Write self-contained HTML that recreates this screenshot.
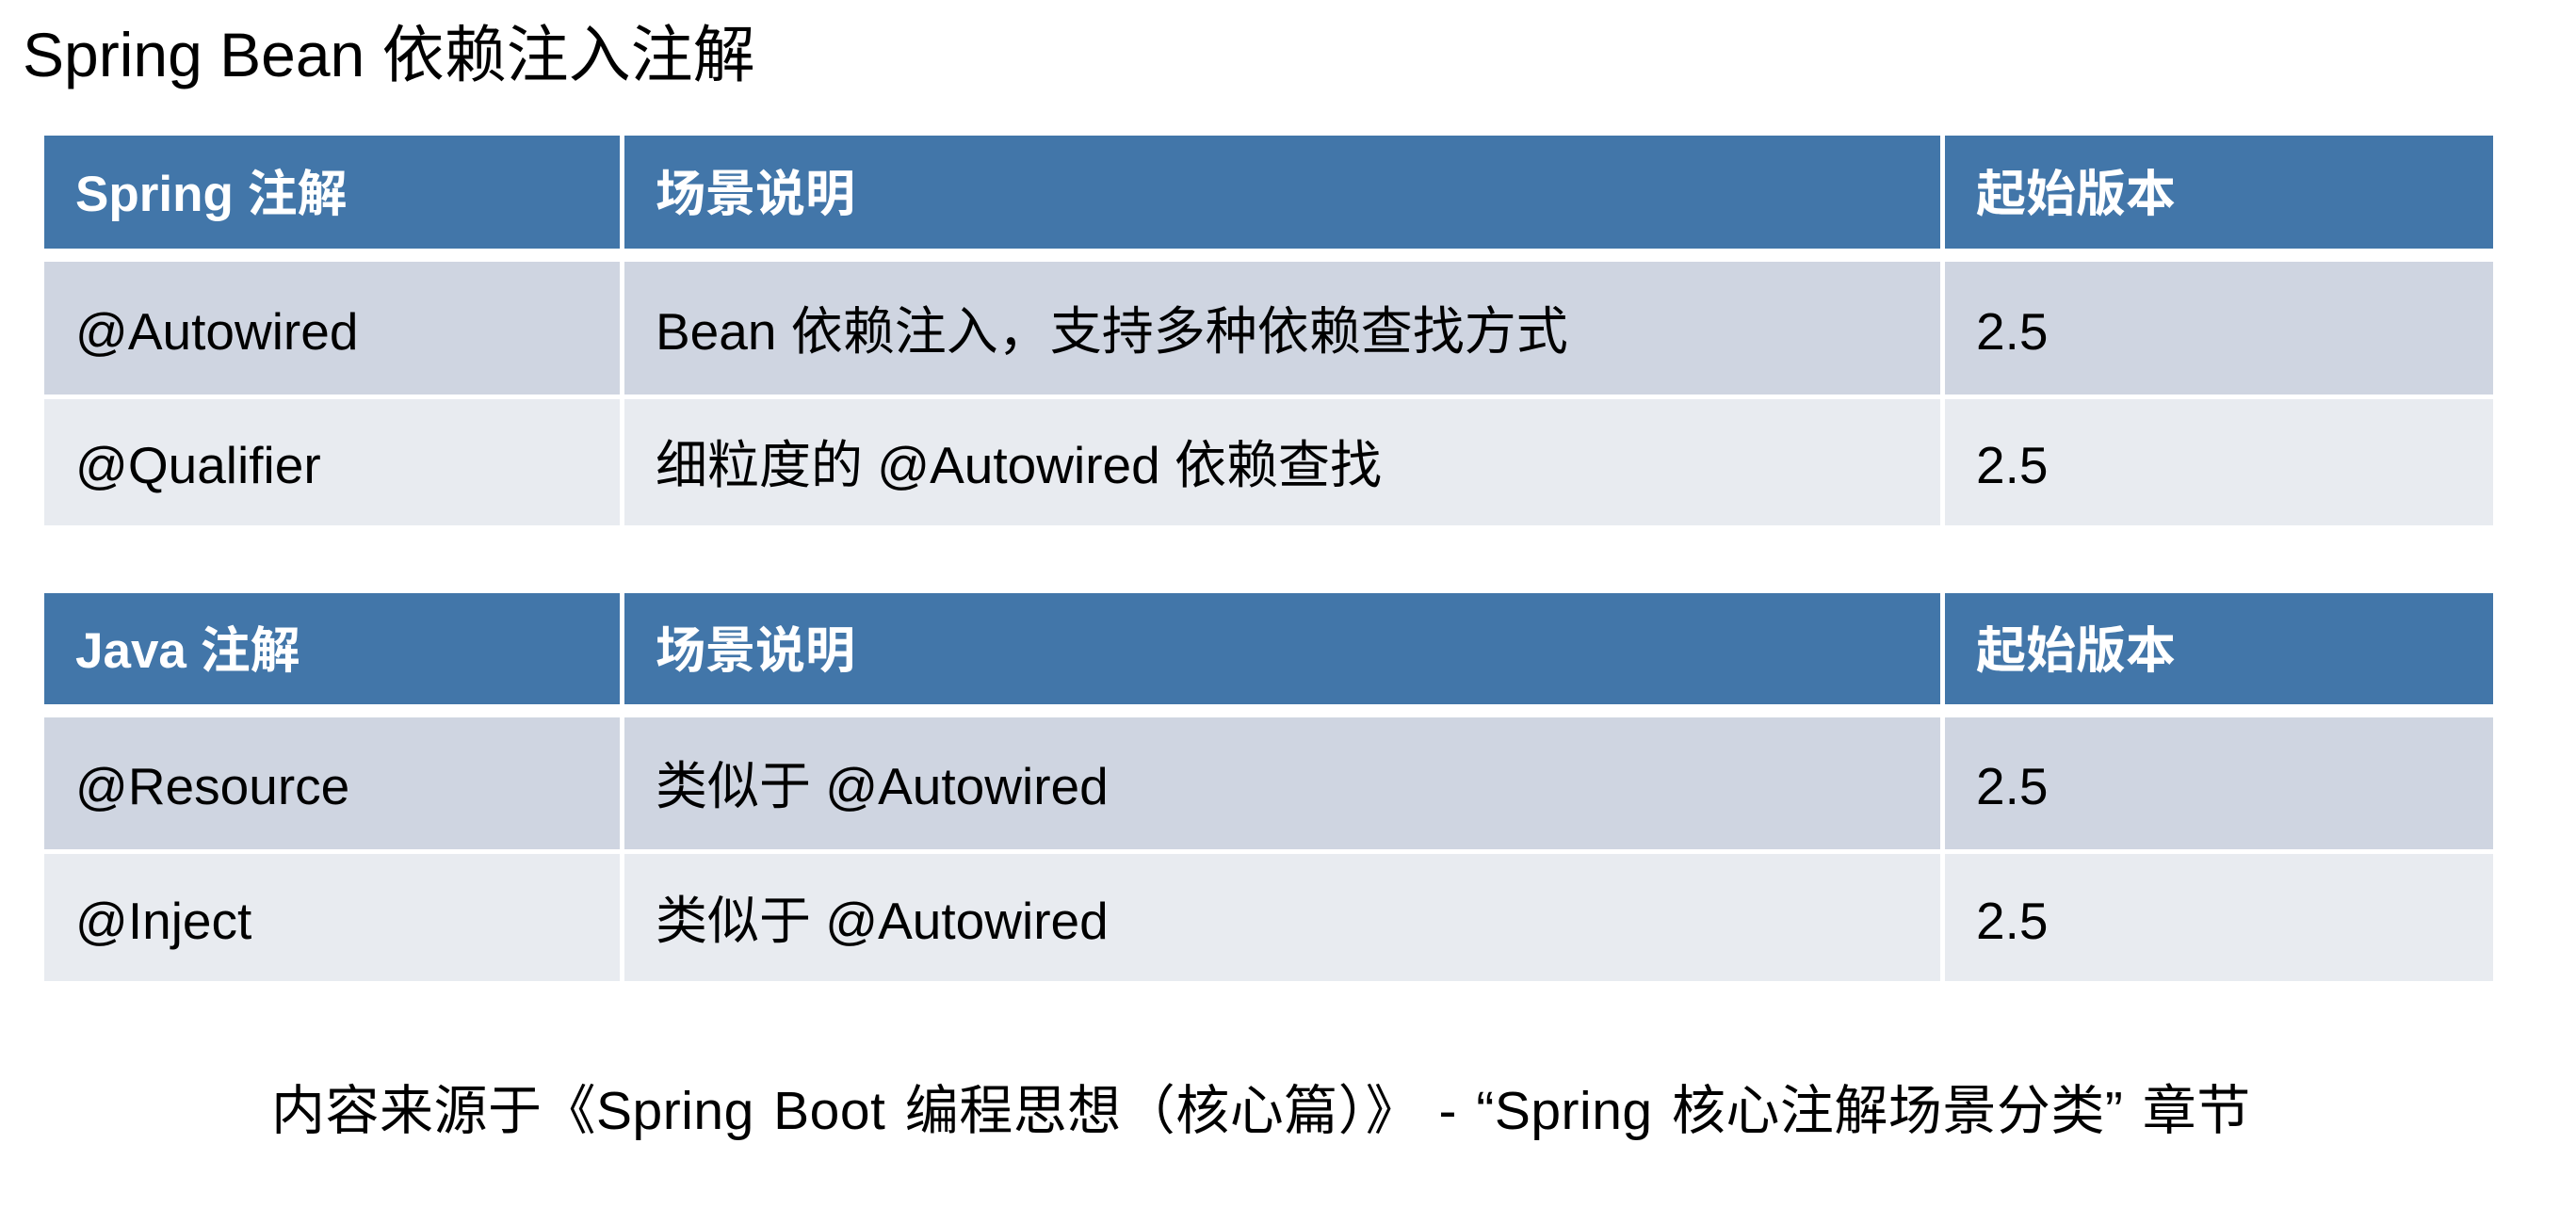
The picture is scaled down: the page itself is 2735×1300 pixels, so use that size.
<!DOCTYPE html>
<html><head><meta charset="utf-8"><style>
body{margin:0;width:2735px;height:1300px;background:#fff;position:relative;overflow:hidden;font-family:"Liberation Sans","Noto Sans CJK SC",sans-serif;color:#000}
.c{position:absolute;display:flex;align-items:center;box-sizing:border-box;padding-left:33px;font-size:55px;line-height:66px;white-space:nowrap}
.c span{display:inline-block;line-height:66px;padding-top:6px}
.h{background:#4276a9;color:#fff;font-weight:bold;font-size:53px}
.r1{background:#cfd5e1}
.r2{background:#e8ebf0}
.t{position:absolute;white-space:nowrap;line-height:80px}
</style></head><body>
<div class="t" style="left:24px;top:18px;font-size:66px">Spring Bean 依赖注入注解</div>

<div class="c h" style="left:47px;top:144px;width:611px;height:120px"><span>Spring 注解</span></div>
<div class="c h" style="left:663px;top:144px;width:1397px;height:120px"><span>场景说明</span></div>
<div class="c h" style="left:2065px;top:144px;width:582px;height:120px"><span>起始版本</span></div>
<div class="c r1" style="left:47px;top:278px;width:611px;height:141px"><span>@Autowired</span></div>
<div class="c r1" style="left:663px;top:278px;width:1397px;height:141px"><span>Bean 依赖注入，支持多种依赖查找方式</span></div>
<div class="c r1" style="left:2065px;top:278px;width:582px;height:141px"><span>2.5</span></div>
<div class="c r2" style="left:47px;top:424px;width:611px;height:134px"><span>@Qualifier</span></div>
<div class="c r2" style="left:663px;top:424px;width:1397px;height:134px"><span>细粒度的 @Autowired 依赖查找</span></div>
<div class="c r2" style="left:2065px;top:424px;width:582px;height:134px"><span>2.5</span></div>

<div class="c h" style="left:47px;top:630px;width:611px;height:118px"><span>Java 注解</span></div>
<div class="c h" style="left:663px;top:630px;width:1397px;height:118px"><span>场景说明</span></div>
<div class="c h" style="left:2065px;top:630px;width:582px;height:118px"><span>起始版本</span></div>
<div class="c r1" style="left:47px;top:762px;width:611px;height:140px"><span>@Resource</span></div>
<div class="c r1" style="left:663px;top:762px;width:1397px;height:140px"><span>类似于 @Autowired</span></div>
<div class="c r1" style="left:2065px;top:762px;width:582px;height:140px"><span>2.5</span></div>
<div class="c r2" style="left:47px;top:907px;width:611px;height:135px"><span>@Inject</span></div>
<div class="c r2" style="left:663px;top:907px;width:1397px;height:135px"><span>类似于 @Autowired</span></div>
<div class="c r2" style="left:2065px;top:907px;width:582px;height:135px"><span>2.5</span></div>

<div class="t" style="left:288px;top:1140px;font-size:57px;letter-spacing:0.5px;word-spacing:4px">内容来源于《Spring Boot 编程思想（核心篇）》 - “Spring 核心注解场景分类” 章节</div>
</body></html>
